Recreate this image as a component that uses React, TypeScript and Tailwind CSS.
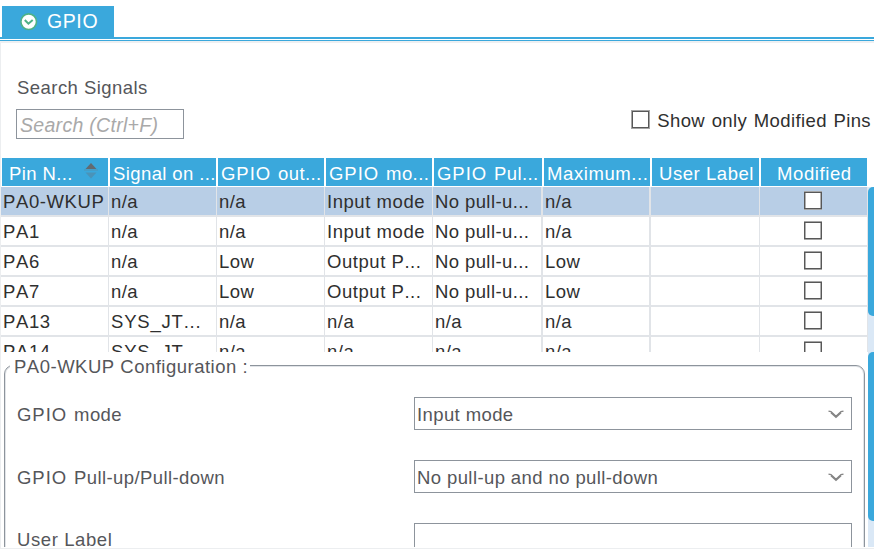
import React from "react";

const columns = [
  { label: "Pin N...", head: "pl-[7px]" },
  { label: "Signal on ...", head: "pl-[3px]" },
  { label: "GPIO out...", head: "pl-[3px]" },
  { label: "GPIO mo...", head: "pl-[3px]" },
  { label: "GPIO Pul...", head: "pl-[3px]" },
  { label: "Maximum...", head: "pl-[3px] tracking-[0.6px]" },
  { label: "User Label", head: "pl-[7px] tracking-[0.55px]" },
  { label: "Modified", head: "pl-[16px] tracking-[0.6px]" },
];

const rows = [
  ["PA0-WKUP", "n/a", "n/a", "Input mode", "No pull-u...", "n/a"],
  ["PA1", "n/a", "n/a", "Input mode", "No pull-u...", "n/a"],
  ["PA6", "n/a", "Low", "Output P...", "No pull-u...", "Low"],
  ["PA7", "n/a", "Low", "Output P...", "No pull-u...", "Low"],
  ["PA13", "SYS_JT...", "n/a", "n/a", "n/a", "n/a"],
  ["PA14", "SYS_JT...", "n/a", "n/a", "n/a", "n/a"],
];

const cellClass = [
  "border-r pl-[2px] tracking-[0.6px]",
  "border-r pl-[2px]",
  "border-r pl-[2px]",
  "border-r pl-[2px] tracking-[0.55px]",
  "border-r-2 pl-[2px]",
  "border-r-2 pl-[2px]",
  "border-r",
  "border-r",
];

// Sets a leading "GPIO" a little wider than the words after it.
function Label({ text }: { text: string }) {
  if (!text.startsWith("GPIO ")) return <span>{text}</span>;
  return (
    <span>
      <span className="mr-[1.5px] tracking-[0.95px]">GPIO</span>
      {text.slice(4)}
    </span>
  );
}

function RowCheckbox() {
  return (
    <span className="block h-[19px] w-[18px] border-y border-[#a5a5a5]">
      <span className="block h-[17px] w-[18px] border border-[#585858] bg-white">
        <span className="block h-[15px] w-4 border-x border-[#b0b0b0]" />
      </span>
    </span>
  );
}

function Field({ label, value, select }: { label: string; value?: string; select?: boolean }) {
  return (
    <div className="flex h-[33px] shrink-0 items-start">
      <span className={`w-[397px] leading-[30px] ${select ? "pt-[3px]" : "pt-[2px] tracking-[0.6px]"}`}>
        <Label text={label} />
      </span>
      <div className="flex h-[33px] w-[438px] items-center justify-between border border-[#8d949c] bg-white pl-[2px] pr-[7px]">
        <span className="pt-[3px] leading-[30px]">{value}</span>
        {select && (
          <svg width="16" height="9" viewBox="0 0 16 9" fill="none" stroke="#858585" className="mt-[2px]">
            <path d="M0.5 1.2 L3 1.7 L8 6.3 L13 1.7 L15.5 1.2" strokeWidth="1.3" />
            <path d="M3 2.6 L8 7.2 L13 2.6" strokeWidth="1.5" />
          </svg>
        )}
      </div>
    </div>
  );
}

export default function App() {
  return (
    <div className="flex h-[549px] w-[874px] flex-col overflow-hidden bg-white font-['Liberation_Sans',Arial,sans-serif] text-[18.5px] tracking-[0.4px] text-[#55565a] [font-kerning:none] whitespace-nowrap">
      <div className="ml-[2px] mt-[6px] flex h-[31px] w-[112px] shrink-0 items-center bg-[#3aa8dc] pl-[18px] text-white">
        <svg width="18" height="18" viewBox="0 0 18 18" className="shrink-0">
          <circle cx="8.7" cy="8.7" r="7.8" fill="#fff" stroke="#4fb286" strokeWidth="1.6" />
          <path d="M4.8 7 L8.4 10.7 L12.7 7" fill="none" stroke="#4fb286" strokeWidth="2" />
        </svg>
        <span className="-mt-[2px] ml-[9px] text-[19.5px] leading-[30px] tracking-[0.6px]">GPIO</span>
      </div>
      <div className="h-[6px] shrink-0 border-t-2 border-b-2 border-t-[#3aa8dc] border-b-[#eef0f2]">
        <div className="mt-px h-px bg-[#3aa8dc]" />
      </div>

      <div className="flex h-[505px] flex-col border-l border-[#eceef0]">
        <div className="flex h-[115px] shrink-0 justify-between pl-[15px]">
          <div className="pt-[33px]">
            <div className="pl-px leading-6 tracking-[0.45px]">Search Signals</div>
            <div className="mt-[9px] h-[30px] w-[168px] border border-[#8d949c] pl-[3px] text-[19.5px] italic leading-[30px] tracking-[0.3px] text-[#a9a9a9]">
              Search (Ctrl+F)
            </div>
          </div>
          <div className="flex items-start pr-[3px] pt-[65px] text-[#2f2f2f] [word-spacing:1px]">
            <span className="mr-[7px] mt-[2px] block size-[19px] shrink-0 border border-[#a5a5a5]">
              <span className="block size-[17px] border border-[#585858] bg-white" />
            </span>
            <span className="pt-px leading-6">Show only Modified Pins</span>
          </div>
        </div>

        <div className="flex h-[194px] shrink-0">
          <div className="w-[867px] overflow-hidden">
            <div className="grid h-[29px] grid-cols-[106px_106px_106px_106px_108px_106px_107px_106px] gap-x-[2px] border-b border-white pl-px text-white">
              {columns.map((c, i) => (
                <div key={c.label} className={`flex h-7 overflow-hidden bg-[#3aa8dc] pt-[2px] leading-7 ${c.head}`}>
                  <Label text={c.label} />
                  {i === 0 && (
                    <svg width="14" height="18" viewBox="0 0 14 18" className="ml-[11px] mt-[3px]">
                      <path d="M7 0 L12.5 6 H1.5 Z" fill="#626a70" />
                      <path d="M0 7 H14" stroke="#4d93b5" />
                      <path d="M1.5 9.5 H12.5 L7 15.5 Z" fill="#4a93b8" />
                    </svg>
                  )}
                </div>
              ))}
            </div>
            {rows.map((r, ri) => (
              <div
                key={r[0]}
                className={`grid h-[30px] grid-cols-[108px_108px_108px_108px_110px_108px_109px_108px] border-b-2 border-[#e1e4e8] text-[#2f2f2f] ${ri === 0 ? "bg-[#b8cee6]" : "bg-white"}`}
              >
                {cellClass.map((cls, ci) => (
                  <div key={ci} className={`h-7 overflow-hidden border-[#e1e4e8] pt-px leading-7 ${cls}`}>
                    {ci === 7 ? (
                      <div className="pl-[44px] pt-[3px]">
                        <RowCheckbox />
                      </div>
                    ) : (
                      <span className={ri > 3 && ci === 1 ? "tracking-[0.8px]" : ""}>{r[ci]}</span>
                    )}
                  </div>
                ))}
              </div>
            ))}
          </div>
          <div className="mt-[29px] h-[165px] w-[6px] bg-[#dae8f6]">
            <div className="h-[129px] rounded-l-[5px] bg-[#3aa8dc]" />
          </div>
        </div>

        <div className="flex h-[195px] shrink-0">
          <div className="w-[867px] overflow-hidden pl-[3px] pt-[13px]">
            <div className="relative flex h-[220px] w-[861px] flex-col gap-[30px] rounded-[9px] border border-[#8d949c] pl-3 pt-[31px] shadow-[inset_0_0_0_1px_#e1e4e8]">
              <span className="absolute left-[5px] top-[-12px] h-[26px] w-[240px] bg-white pl-[4px] leading-[26px] tracking-[0.5px]">
                PA0-WKUP Configuration :
              </span>
              <Field label="GPIO mode" value="Input mode" select />
              <Field label="GPIO Pull-up/Pull-down" value="No pull-up and no pull-down" select />
              <Field label="User Label" />
            </div>
          </div>
          <div className="w-[6px] bg-[#dae8f6]">
            <div className="h-[169px] rounded-l-[5px] bg-[#3aa8dc]" />
          </div>
        </div>
      </div>
      <div className="h-px shrink-0 bg-[#eceef0]" />
    </div>
  );
}
